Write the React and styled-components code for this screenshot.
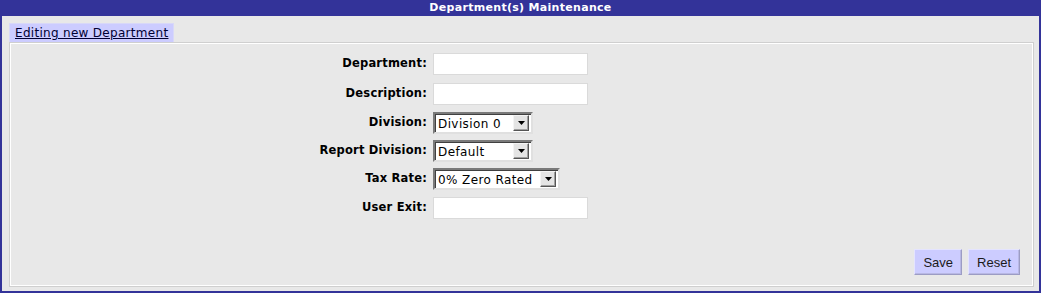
import React from "react";
import styled, { createGlobalStyle } from "styled-components";

const Global = createGlobalStyle`
  html, body { margin: 0; padding: 0; background: #e8e8e8; }
  * { box-sizing: border-box; }
`;

const Frame = styled.div`
  width: 1041px;
  height: 293px;
  display: flex;
  flex-direction: column;
  border: 2px solid #333399;
  border-top: 0;
  background: #e8e8e8;
  font-family: "DejaVu Sans", Verdana, sans-serif;
`;

const TitleBar = styled.div`
  height: 16px;
  margin: 0 -2px;
  background: #333399;
  color: #ffffff;
  font-size: 11px;
  font-weight: bold;
  letter-spacing: 0.3px;
  line-height: 15px;
  text-align: center;
`;

const Content = styled.div`
  flex: 1;
  display: flex;
  flex-direction: column;
  padding: 7px 5px 4px 7px;
`;

const TabRow = styled.div`
  display: flex;
`;

const Tab = styled.a`
  display: block;
  height: 19px;
  padding: 0 5px;
  background: #ccccff;
  border: 1px solid #d8d8f8;
  border-bottom: 0;
  color: #000033;
  font-size: 12px;
  letter-spacing: 0.3px;
  line-height: 19px;
  text-decoration: underline;
  cursor: pointer;
`;

const Panel = styled.div`
  flex: 1;
  display: flex;
  flex-direction: column;
  border: 1px solid #ffffff;
  outline: 1px solid #cfcfcf;
  margin: 1px;
  background: #e8e8e8;
`;

const Form = styled.div`
  display: grid;
  grid-template-columns: 416px auto;
  column-gap: 6px;
  row-gap: 6px;
  align-items: center;
  padding-top: 8px;
`;

const Label = styled.div`
  text-align: right;
  font-family: "DejaVu Sans", Verdana, sans-serif;
  font-size: 11.5px;
  letter-spacing: 0.2px;
  font-weight: bold;
  color: #000000;
  padding-bottom: 3px;
`;

const TextInput = styled.input`
  width: 155px;
  height: 22px;
  margin: 1px 0;
  border: 1px solid #dadada;
  background: #ffffff;
  font-family: "DejaVu Sans", Verdana, sans-serif;
  font-size: 12px;
  padding: 0 3px;
  outline: none;
  justify-self: start;
`;

const SelectBox = styled.div`
  width: ${(p) => p.$w}px;
  height: 22px;
  justify-self: start;
  display: flex;
  align-items: center;
  background: #ffffff;
  border-style: solid;
  border-width: 2px;
  border-color: #7a7a7a #e0e0e0 #e0e0e0 #7a7a7a;
  box-shadow: inset 1px 1px 0 #404040;
  padding: 0 2px 0 3px;
  font-size: 12px;
  letter-spacing: 0.4px;
  color: #000;
`;

const SelectText = styled.span`
  flex: 1;
  white-space: nowrap;
  padding-top: 1px;
`;

const DropButton = styled.div`
  width: 16px;
  height: 16px;
  background: #e4e4e4;
  border-style: solid;
  border-width: 1px;
  border-color: #f4f4f4 #555 #555 #f4f4f4;
  box-shadow: inset -1px -1px 0 #a0a0a0;
  display: flex;
  align-items: center;
  justify-content: center;
`;

const Arrow = () => (
  <svg width="7" height="4" viewBox="0 0 7 4">
    <path d="M0 0h7L3.5 4z" fill="#000" />
  </svg>
);

const Select = ({ value, width }) => (
  <SelectBox $w={width}>
    <SelectText>{value}</SelectText>
    <DropButton>
      <Arrow />
    </DropButton>
  </SelectBox>
);

const Spacer = styled.div`
  flex: 1;
`;

const ButtonRow = styled.div`
  display: flex;
  justify-content: flex-end;
  gap: 6px;
  padding: 0 12px 10px 0;
`;

const Button = styled.button`
  height: 26px;
  padding: 0 8px;
  background: #ccccff;
  border-style: solid;
  border-width: 1px;
  border-color: #e4e4ff #9c9cc4 #9c9cc4 #e4e4ff;
  box-shadow: inset -1px -1px 0 #b8b8e4;
  font-family: "Liberation Sans", Arial, sans-serif;
  font-size: 13px;
  color: #1a1a1a;
  cursor: pointer;
`;

export default function App() {
  return (
    <>
      <Global />
      <Frame>
        <TitleBar>Department(s) Maintenance</TitleBar>
        <Content>
          <TabRow>
            <Tab>Editing new Department</Tab>
          </TabRow>
          <Panel>
            <Form>
              <Label>Department:</Label>
              <TextInput />
              <Label>Description:</Label>
              <TextInput />
              <Label>Division:</Label>
              <Select value="Division 0" width={100} />
              <Label>Report Division:</Label>
              <Select value="Default" width={100} />
              <Label>Tax Rate:</Label>
              <Select value="0% Zero Rated" width={127} />
              <Label>User Exit:</Label>
              <TextInput />
            </Form>
            <Spacer />
            <ButtonRow>
              <Button>Save</Button>
              <Button>Reset</Button>
            </ButtonRow>
          </Panel>
        </Content>
      </Frame>
    </>
  );
}
